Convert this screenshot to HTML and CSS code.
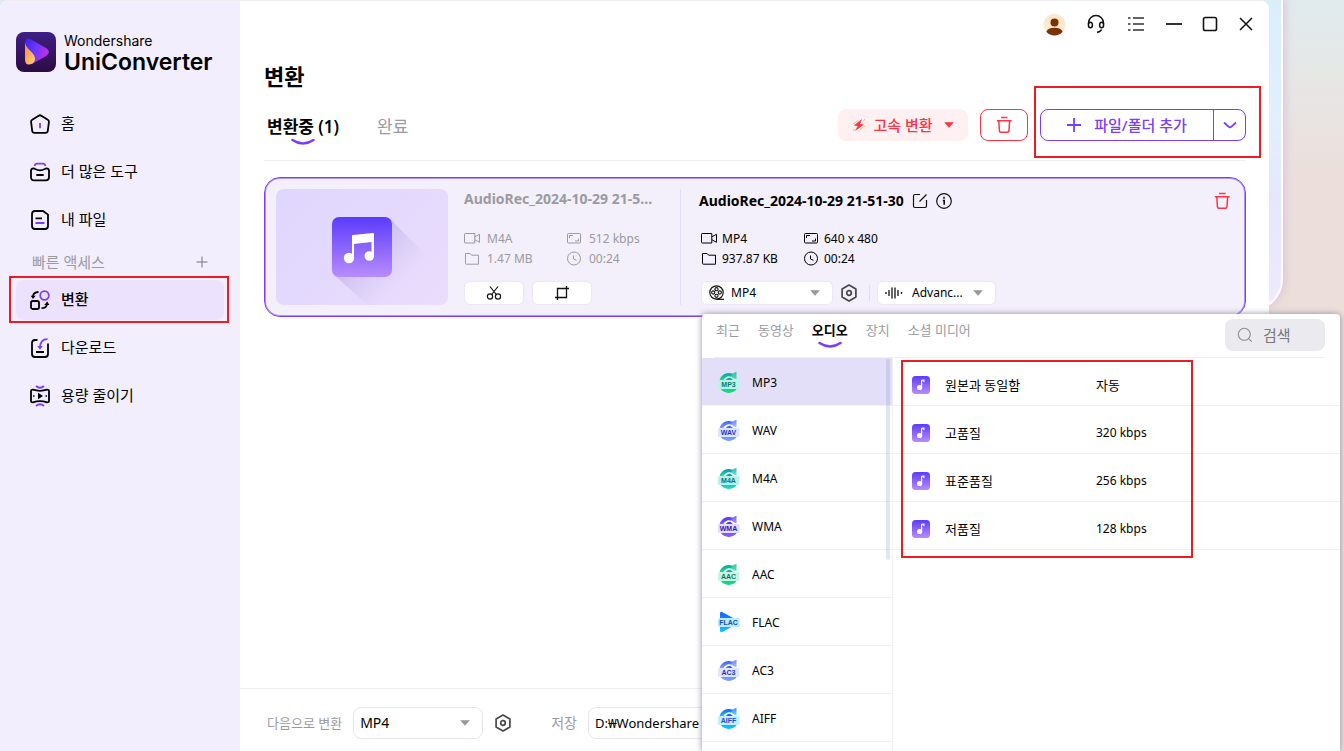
FILE: index.html
```html
<!DOCTYPE html>
<html lang="ko">
<head>
<meta charset="utf-8">
<meta name="viewport" content="width=device-width, initial-scale=1">
<title>Wondershare UniConverter</title>
<link rel="stylesheet" href="styles.css">
</head>
<body>
<svg class="defs" width="0" height="0" aria-hidden="true">
  <defs>
    <linearGradient id="note-bg" x1="0" y1="0" x2="0" y2="1"><stop offset="0" stop-color="#5b3bfb"/><stop offset="1" stop-color="#b88cfd"/></linearGradient>
    <linearGradient id="logo-bg" x1="0" y1="0" x2="0" y2="1"><stop offset="0" stop-color="#3f1f86"/><stop offset="1" stop-color="#2c0c40"/></linearGradient>
    <linearGradient id="logo-play" x1="0" y1="0" x2="1" y2="0.4"><stop offset="0" stop-color="#3a22e8"/><stop offset="0.5" stop-color="#6a35ff"/><stop offset="1" stop-color="#c030e8"/></linearGradient>
    <linearGradient id="logo-drop" x1="0" y1="0" x2="1" y2="1"><stop offset="0" stop-color="#ff8a3c"/><stop offset="1" stop-color="#ffd27a"/></linearGradient>
    <linearGradient id="g-green" x1="0" y1="0" x2="0" y2="1"><stop offset="0" stop-color="#00a9a5"/><stop offset="1" stop-color="#1fdc7c"/></linearGradient>
    <linearGradient id="g-teal" x1="0" y1="0" x2="0" y2="1"><stop offset="0" stop-color="#0099a8"/><stop offset="1" stop-color="#20dcc0"/></linearGradient>
    <linearGradient id="g-blue" x1="0" y1="0" x2="0" y2="1"><stop offset="0" stop-color="#3f5bff"/><stop offset="1" stop-color="#82a5ff"/></linearGradient>
    <linearGradient id="g-violet" x1="0" y1="0" x2="0" y2="1"><stop offset="0" stop-color="#4a35f5"/><stop offset="1" stop-color="#8c62ff"/></linearGradient>
    <linearGradient id="g-sky" x1="0" y1="0" x2="0" y2="1"><stop offset="0" stop-color="#1560ff"/><stop offset="1" stop-color="#10ccff"/></linearGradient>
  </defs>
  <symbol id="smile" viewBox="0 0 24 8"><path d="M1.500 2Q12 9 22.500 2" fill="none" stroke="#7b3dfc" stroke-width="2.600" stroke-linecap="round"/></symbol>
  <symbol id="caret" viewBox="0 0 10 6"><path d="M.8.5h8.400L5 5.400z" fill="currentColor" stroke="currentColor" stroke-linejoin="round" stroke-width=".6"/></symbol>
  <symbol id="trash" viewBox="0 0 16 18"><path d="M5 1.500h6.500M.8 4.800h14.800M2.800 5l.6 9.600q.1 1.600 1.600 1.600h6.400q1.500 0 1.600-1.600L13.600 5" fill="none" stroke="currentColor" stroke-width="1.500"/></symbol>
  <symbol id="camera" viewBox="0 0 17 16"><path d="M1.200 2.500h9.600v9.500H1.200q-.7 0-.7-.7V3.200q0-.7.7-.7zM10.800 5.800l4.700-2.500v8L10.800 8.700" fill="none" stroke="currentColor"/></symbol>
  <symbol id="folder" viewBox="0 0 17 16"><path d="M1.500 12.500v-10h4.600l1.500 1.700h6.900v9H2.300q-.8 0-.8-.7z" fill="none" stroke="currentColor"/></symbol>
  <symbol id="screen" viewBox="0 0 17 16"><rect x="1.500" y="2.500" width="13" height="9.500" rx="1" fill="none" stroke="currentColor"/><path d="M3.500 7V4.500H7M12.500 7.500V10H9" fill="none" stroke="currentColor"/></symbol>
  <symbol id="clock" viewBox="0 0 17 16"><circle cx="8" cy="7.500" r="6.500" fill="none" stroke="currentColor"/><path d="M7.500 4.500V8l3 1.300" fill="none" stroke="currentColor"/></symbol>
  <symbol id="hexnut" viewBox="0 0 18 18"><path d="M9 1l6.900 3.900v8.200L9 17l-6.900-3.900V4.900z" fill="none" stroke="#484848" stroke-width="1.700" stroke-linejoin="round"/><circle cx="9" cy="9" r="2.300" fill="none" stroke="#484848" stroke-width="1.700"/></symbol>
  <symbol id="note-small" viewBox="0 0 18 18"><rect width="18" height="18" rx="3.500" fill="url(#note-bg)"/><circle cx="7.600" cy="11.500" r="2.600" fill="#fff"/><path d="M9.600 11.500V5q0-.9 1-.9h1.300v2" fill="none" stroke="#fff" stroke-width="1.200"/></symbol>
  <symbol id="disc-note" viewBox="0 0 22 22"><path d="M1.500 9.500A9.500 9.500 0 0 1 14.500 2.800L13.300 5.800A6.300 6.300 0 0 0 5 9.500z"/><path d="M7.500 9.500Q8.800 6.600 12.200 6.800L15.500 9.500zM2.500 17.500h16.500A9.800 9.800 0 0 1 2.500 17.500z"/><path d="M11.800 3.800 18.500.8v7.400Q14.500 7.500 11.800 3.800z" opacity=".75"/></symbol>
</svg>

<div class="back-window"></div>

<div class="app">
  <aside class="sidebar">
    <div class="brand">
      <svg width="40" height="40" viewBox="0 0 40 40" aria-hidden="true"><rect width="40" height="40" rx="8" fill="url(#logo-bg)"/><path d="M9 11Q9 5 15 7.500L30 16q6 4 0 8L17 31.500Q9 34 9 26z" fill="url(#logo-play)"/><path d="M9 10q0 4 5.500 9 8 8 2 12.500Q9 35 9 27z" fill="url(#logo-drop)"/></svg>
      <div class="brand-text"><span class="brand-maker">Wondershare</span><span class="brand-name">UniConverter</span></div>
    </div>
    <nav>
      <ul class="nav-list">
        <li><a class="nav-item" href="#home"><svg width="20" height="20" viewBox="0 0 20 20"><path d="M8.700 1.700q1.300-.9 2.600 0l6.500 4.100q1.300.9 1.100 2.300l-1.100 8.800q-.3 2-2.300 2h-11q-2 0-2.300-2L1.100 8.100Q.9 6.700 2.200 5.800z" fill="none" stroke="#000" stroke-width="1.800"/><path d="M10 9v5.200" stroke="#7b3dfc" stroke-width="1.800"/></svg><span>홈</span></a></li>
        <li><a class="nav-item" href="#tools"><svg width="20" height="20" viewBox="0 0 20 20"><path d="M4.800 4Q5 1.700 7 1.700h6q2 0 2.200 2.300" fill="none" stroke="#7b3dfc" stroke-width="1.800"/><path d="M1 9q0-2.600 2.400-2.600 1 0 1.700.6Q10 9.600 14.900 7q.7-.6 1.700-.6Q19 6.400 19 9v6q0 3.400-3.300 3.400H4.300Q1 18.400 1 15z" fill="none" stroke="#000" stroke-width="1.800"/><path d="M6.300 13h7.400" stroke="#000" stroke-width="1.800"/></svg><span>더 많은 도구</span></a></li>
        <li><a class="nav-item" href="#files"><svg width="20" height="20" viewBox="0 0 20 20"><path d="M5 1h8l5 3.600V16q0 3-3 3H5q-3 0-3-3V4q0-3 3-3z" fill="none" stroke="#000" stroke-width="1.800"/><path d="M5.500 8.300h6.500" stroke="#000" stroke-width="1.800"/><path d="M5.500 13h9" stroke="#7b3dfc" stroke-width="1.800"/></svg><span>내 파일</span></a></li>
      </ul>
      <div class="nav-heading"><span>빠른 액세스</span><button class="icon-button" type="button" aria-label="추가"><svg width="12" height="12" viewBox="0 0 12 12"><path d="M6 .5v11M.5 6h11" stroke="#77727f"/></svg></button></div>
      <ul class="nav-list">
        <li><a class="nav-item nav-item-active" href="#convert"><svg width="20" height="20" viewBox="0 0 20 20"><circle cx="14.500" cy="5.500" r="4.300" fill="none" stroke="#7b3dfc" stroke-width="1.800"/><rect x="1" y="11" width="8" height="8" rx="1.800" fill="none" stroke="#000" stroke-width="1.800"/><path d="M8.500 2Q3.200 2.200 3 6.500M11.500 18.200q5.200-.2 5.500-4" fill="none" stroke="#000" stroke-width="1.800"/><path d="M.7 5.800h5L3 9zM14.200 15l3-3.400 2.200 3.400z"/></svg><span>변환</span><i class="callout callout-nav"></i></a></li>
        <li><a class="nav-item" href="#download"><svg width="20" height="20" viewBox="0 0 20 20"><path d="M7.500 2H5Q2 2 2 5v11q0 3 3 3h10q3 0 3-3V5.500M6 14h8" fill="none" stroke="#000" stroke-width="1.800"/><path d="M17.500 1.200Q10 1 10 10" fill="none" stroke="#7b3dfc" stroke-width="1.800"/><path d="M7.300 8h5.400L10 11.800z" fill="#7b3dfc"/></svg><span>다운로드</span></a></li>
        <li><a class="nav-item" href="#compress"><svg width="20" height="22" viewBox="0 0 20 22"><path d="M6 1q4 3.400 8 0M6 21q4-3.400 8 0" fill="none" stroke="#7b3dfc" stroke-width="2"/><path d="M1 6.200Q1 4.500 3 4.700q7 2.200 14 0 2-.2 2 1.500v9.600q0 1.700-2 1.500-7-2.200-14 0-2 .2-2-1.500z" fill="none" stroke="#000" stroke-width="1.800"/><path d="M8 7.700v6.600l5-3.300z"/><path d="M3 11h1.500M15.500 11H17" stroke="#000" stroke-width="1.500"/></svg><span>용량 줄이기</span></a></li>
      </ul>
    </nav>
  </aside>

  <main class="main">
    <header class="titlebar">
      <button class="icon-button titlebar-tool" type="button" aria-label="계정"><svg width="23" height="23" viewBox="0 0 24 24"><circle cx="12" cy="12" r="11.300" fill="#ffe9cc"/><circle cx="12" cy="10" r="4.200" fill="#7a3206"/><path d="M3.500 19.500q1.500-4 8.500-4t8.500 4Q17 23.500 12 23.500t-8.500-4z" fill="#7a3206"/></svg></button>
      <button class="icon-button titlebar-tool" type="button" aria-label="고객 지원"><svg width="18" height="20" viewBox="0 0 18 20"><path d="M1.500 10V9a7.500 7.500 0 0 1 15 0v1" fill="none" stroke="#111" stroke-width="1.500"/><ellipse cx="3.400" cy="11" rx="2" ry="2.800" fill="none" stroke="#111" stroke-width="1.500"/><ellipse cx="14.600" cy="11" rx="2" ry="2.800" fill="none" stroke="#111" stroke-width="1.500"/><path d="M14.500 15.500Q13.500 18 10 18.300" fill="none" stroke="#111" stroke-width="1.500"/></svg></button>
      <button class="icon-button titlebar-tool" type="button" aria-label="메뉴"><svg width="16" height="16" viewBox="0 0 16 16"><path d="M0 2h2.500M5 2h11M0 8h2.500M5 8h11M0 14h2.500M5 14h11" stroke="#333" stroke-width="1.600"/></svg></button>
      <button class="icon-button" type="button" aria-label="최소화"><svg width="16" height="16" viewBox="0 0 16 16"><path d="M0 8h16" stroke="#333" stroke-width="1.800"/></svg></button>
      <button class="icon-button" type="button" aria-label="최대화"><svg width="16" height="16" viewBox="0 0 16 16"><rect x="1.500" y="1.500" width="13" height="13" rx="1.800" fill="none" stroke="#111" stroke-width="1.600"/></svg></button>
      <button class="icon-button" type="button" aria-label="닫기"><svg width="16" height="16" viewBox="0 0 16 16"><path d="M2 2l12 12M14 2 2 14" stroke="#111" stroke-width="1.500"/></svg></button>
    </header>

    <div class="content">
      <h1 class="page-title">변환</h1>
      <div class="toolbar">
        <button class="tab tab-active" type="button">변환중 (1)<svg class="smile" width="24" height="8"><use href="#smile"/></svg></button>
        <button class="tab" type="button">완료</button>
        <div class="actions">
          <button class="fast-button" type="button"><svg width="14" height="14" viewBox="0 0 14 14"><path d="M10 1 1.800 7.500l3.900.5L3 13l9-6.500-4-.5z" fill="#ff3246"/><path d="M1 6l5-3.500M8 11.500 13 8M11 3.500 13 1M1 13l1.500-2" stroke="#ffc04a"/></svg><span>고속 변환</span><svg class="fast-caret" width="10" height="6"><use href="#caret"/></svg></button>
          <button class="clear-button" type="button" aria-label="모두 삭제"><svg width="16" height="18"><use href="#trash"/></svg></button>
          <div class="add-group">
            <button class="add-button" type="button"><svg width="14" height="14" viewBox="0 0 14 14"><path d="M7 0v14M0 7h14" stroke="#7b3dfc" stroke-width="1.800"/></svg><span>파일/폴더 추가</span></button>
            <button class="add-more" type="button" aria-label="추가 옵션"><svg width="14" height="8" viewBox="0 0 14 8"><path d="M1 1.500 5.500 5.700q1.500 1.400 3 0L13 1.500" fill="none" stroke="#7b3dfc" stroke-width="1.800"/></svg></button>
            <i class="callout callout-add"></i>
          </div>
        </div>
      </div>

      <article class="card">
        <div class="thumb">
          <svg width="172" height="116" viewBox="0 0 172 116" aria-hidden="true">
            <defs><linearGradient id="long-shadow" gradientUnits="userSpaceOnUse" x1="95" y1="50" x2="132" y2="88"><stop offset="0" stop-color="#b8a8e0" stop-opacity=".6"/><stop offset="1" stop-color="#cdbcf0" stop-opacity="0"/></linearGradient></defs>
            <path d="M114 30 160 76 110 116H92L58 86z" fill="url(#long-shadow)"/>
            <rect x="56" y="28" width="60" height="60" rx="7" fill="url(#note-bg)"/>
            <path d="M76 47q0-1 1-1l20-2q1 0 1 1v23h-2.500V53L78 55v14h-2z" fill="#fff"/>
            <circle cx="73" cy="69" r="5.200" fill="#fff"/><circle cx="93.300" cy="67" r="4.800" fill="#fff"/>
          </svg>
        </div>
        <section class="source">
          <h2 class="file-name">AudioRec_2024-10-29 21-5...</h2>
          <ul class="meta">
            <li><svg width="17" height="16"><use href="#camera"/></svg>M4A</li>
            <li><svg width="17" height="16"><use href="#screen"/></svg>512 kbps</li>
            <li><svg width="17" height="16"><use href="#folder"/></svg>1.47 MB</li>
            <li><svg width="17" height="16"><use href="#clock"/></svg>00:24</li>
          </ul>
          <div class="controls">
            <button class="chip" type="button" aria-label="자르기"><svg width="16" height="16" viewBox="0 0 16 16"><path d="M4 1.500 10.700 10M12 1.500 5.300 10" stroke="#111" stroke-width="1.200"/><circle cx="4" cy="11.500" r="2.600" fill="none" stroke="#111" stroke-width="1.200"/><circle cx="12" cy="11.500" r="2.600" fill="none" stroke="#111" stroke-width="1.200"/></svg></button>
            <button class="chip" type="button" aria-label="영역 자르기"><svg width="16" height="16" viewBox="0 0 16 16"><path d="M3.500 15V3.500H15M1 12.500h11.500V1" fill="none" stroke="#111" stroke-width="1.300"/></svg></button>
          </div>
        </section>
        <section class="target">
          <div class="target-head">
            <h2 class="file-name">AudioRec_2024-10-29 21-51-30</h2>
            <button class="icon-button" type="button" aria-label="이름 변경"><svg width="16" height="16" viewBox="0 0 16 16"><path d="M8 1.500H3Q1.500 1.500 1.500 3v10q0 1.500 1.500 1.500h10q1.500 0 1.500-1.500V7M7.500 8.500 14.500 1.500" fill="none" stroke="#111" stroke-width="1.200"/></svg></button>
            <button class="icon-button" type="button" aria-label="정보"><svg width="16" height="16" viewBox="0 0 16 16"><circle cx="8" cy="8" r="7.300" fill="none" stroke="#111" stroke-width="1.200"/><path d="M8 3.800v1.900M6.800 7.500H8.200v4.300" fill="none" stroke="#111" stroke-width="1.600"/></svg></button>
            <button class="icon-button remove" type="button" aria-label="삭제"><svg width="16" height="18"><use href="#trash"/></svg></button>
          </div>
          <ul class="meta">
            <li><svg width="17" height="16"><use href="#camera"/></svg>MP4</li>
            <li><svg width="17" height="16"><use href="#screen"/></svg>640 x 480</li>
            <li><svg width="17" height="16"><use href="#folder"/></svg>937.87 KB</li>
            <li><svg width="17" height="16"><use href="#clock"/></svg>00:24</li>
          </ul>
          <div class="controls">
            <label class="picker picker-format"><svg width="16" height="16" viewBox="0 0 16 16"><circle cx="7.500" cy="7.500" r="6.700" fill="none" stroke="#111" stroke-width="1.200"/><path d="M7.500 14.300H15" stroke="#111" stroke-width="1.200"/><g fill="none" stroke="#111" stroke-width="1.100"><circle cx="7.500" cy="4.200" r="1.600"/><circle cx="7.500" cy="10.800" r="1.600"/><circle cx="4.200" cy="7.500" r="1.600"/><circle cx="10.800" cy="7.500" r="1.600"/></g></svg><select aria-label="출력 형식"><option>MP4</option></select><svg class="caret" width="10" height="6"><use href="#caret"/></svg></label>
            <button class="icon-button" type="button" aria-label="형식 설정"><svg width="18" height="18"><use href="#hexnut"/></svg></button>
            <span class="separator"></span>
            <label class="picker picker-audio"><svg width="18" height="14" viewBox="0 0 18 14"><path d="M1 6v2M4 4v6M7 1.500v11M10 1.500v11M13 4v6M16.500 6v2" stroke="#111" stroke-width="1.300"/></svg><select aria-label="오디오 옵션"><option>Advanc...</option></select><svg class="caret" width="10" height="6"><use href="#caret"/></svg></label>
          </div>
        </section>
      </article>
    </div>

    <footer class="footer">
      <label class="footer-label" for="convert-to">다음으로 변환</label>
      <div class="picker picker-footer"><select id="convert-to"><option>MP4</option></select><svg class="caret" width="10" height="6"><use href="#caret"/></svg></div>
      <button class="icon-button" type="button" aria-label="설정"><svg width="18" height="18"><use href="#hexnut"/></svg></button>
      <label class="save-label" for="save-path">저장</label>
      <input class="path-input" id="save-path" type="text" value="D:₩Wondershare">
    </footer>
  </main>
</div>

<section class="popup" aria-label="출력 형식 선택">
  <header class="popup-head">
    <div class="popup-tabs">
      <button class="popup-tab" type="button">최근</button>
      <button class="popup-tab" type="button">동영상</button>
      <button class="popup-tab popup-tab-active" type="button">오디오<svg class="smile" width="24" height="8"><use href="#smile"/></svg></button>
      <button class="popup-tab" type="button">장치</button>
      <button class="popup-tab" type="button">소셜 미디어</button>
    </div>
    <label class="search"><svg width="16" height="16" viewBox="0 0 16 16"><circle cx="7.300" cy="7.300" r="6" fill="none" stroke="#8e8e93" stroke-width="1.100"/><path d="M11.700 11.700l3 3" stroke="#8e8e93" stroke-width="1.100"/></svg><input type="search" placeholder="검색" aria-label="검색"></label>
  </header>
  <div class="popup-body">
    <ul class="formats">
      <li><button class="format format-active" type="button"><svg width="22" height="22" viewBox="0 0 22 22" fill="url(#g-green)"><use href="#disc-note"/><rect x="0" y="9" width="21.500" height="9" rx="1.500" fill="#b8f5e4"/><text class="badge-text" x="10.500" y="16" fill="#087a68">MP3</text></svg><span>MP3</span></button></li>
      <li><button class="format" type="button"><svg width="22" height="22" viewBox="0 0 22 22" fill="url(#g-blue)"><use href="#disc-note"/><rect x="0" y="9" width="21.500" height="9" rx="1.500" fill="#dbe5ff"/><text class="badge-text" x="10.500" y="16" fill="#2434c8">WAV</text></svg><span>WAV</span></button></li>
      <li><button class="format" type="button"><svg width="22" height="22" viewBox="0 0 22 22" fill="url(#g-teal)"><use href="#disc-note"/><rect x="0" y="9" width="21.500" height="9" rx="1.500" fill="#b5f2e8"/><text class="badge-text" x="10.500" y="16" fill="#08707a">M4A</text></svg><span>M4A</span></button></li>
      <li><button class="format" type="button"><svg width="22" height="22" viewBox="0 0 22 22" fill="url(#g-violet)"><use href="#disc-note"/><rect x="0" y="9" width="21.500" height="9" rx="1.500" fill="#e2dcff"/><text class="badge-text" x="10.500" y="16" fill="#3020b8">WMA</text></svg><span>WMA</span></button></li>
      <li><button class="format" type="button"><svg width="22" height="22" viewBox="0 0 22 22" fill="url(#g-green)"><use href="#disc-note"/><rect x="0" y="9" width="21.500" height="9" rx="1.500" fill="#c5f6e2"/><text class="badge-text" x="10.500" y="16" fill="#087a68">AAC</text></svg><span>AAC</span></button></li>
      <li><button class="format" type="button"><svg width="22" height="22" viewBox="0 0 22 22" fill="url(#g-sky)"><path d="M2 2.500Q2 0 4.500 1.200L18 8.500v5L4.500 21Q2 22 2 19.500z"/><rect x="0" y="7" width="21.500" height="9" rx="1.500" fill="#b8ecff"/><text class="badge-text" x="10.500" y="14" fill="#104ec0">FLAC</text></svg><span>FLAC</span></button></li>
      <li><button class="format" type="button"><svg width="22" height="22" viewBox="0 0 22 22" fill="url(#g-blue)"><use href="#disc-note"/><rect x="0" y="9" width="21.500" height="9" rx="1.500" fill="#e0e6ff"/><text class="badge-text" x="10.500" y="16" fill="#2434c8">AC3</text></svg><span>AC3</span></button></li>
      <li><button class="format" type="button"><svg width="22" height="22" viewBox="0 0 22 22" fill="url(#g-sky)"><use href="#disc-note"/><rect x="0" y="9" width="21.500" height="9" rx="1.500" fill="#c0eeff"/><text class="badge-text" x="10.500" y="16" fill="#1050d0">AIFF</text></svg><span>AIFF</span></button></li>
    </ul>
    <div class="qualities">
      <table class="quality-table">
        <tbody>
          <tr><td class="q-icon"><svg width="18" height="18"><use href="#note-small"/></svg></td><td class="q-name">원본과 동일함</td><td class="q-rate q-auto">자동</td></tr>
          <tr><td class="q-icon"><svg width="18" height="18"><use href="#note-small"/></svg></td><td class="q-name">고품질</td><td class="q-rate">320 kbps</td></tr>
          <tr><td class="q-icon"><svg width="18" height="18"><use href="#note-small"/></svg></td><td class="q-name">표준품질</td><td class="q-rate">256 kbps</td></tr>
          <tr><td class="q-icon"><svg width="18" height="18"><use href="#note-small"/></svg></td><td class="q-name">저품질</td><td class="q-rate">128 kbps</td></tr>
        </tbody>
      </table>
      <i class="callout callout-quality"></i>
    </div>
    <i class="scroll-thumb"></i>
  </div>
</section>
</body>
</html>
```

FILE: styles.css
```css
:root {
  --purple: #7b3dfc;
  --red: #ff3246;
  --line: #f0f0f3;
  --muted: #9b9b9f;
}

* { box-sizing: border-box; }

body {
  position: relative;
  min-height: 100vh;
  margin: 0;
  overflow: hidden;
  background: linear-gradient(180deg, #e0ebee 0, #e8e5e3 100px, #ecdedb 180px, #ecdfda 100%);
  color: #000;
  font: 12px/16px "Noto Sans", "Noto Sans CJK KR", sans-serif;
}

button, input, select {
  margin: 0;
  padding: 0;
  border: 0;
  background: none;
  color: inherit;
  font: inherit;
}

select { appearance: none; outline: 0; }
h1, h2, ul { margin: 0; padding: 0; }
ul { list-style: none; }
svg { display: block; flex: none; }
.defs { position: absolute; }

.icon-button {
  display: flex;
  align-items: center;
  justify-content: center;
  flex: none;
}

/* red highlight frames */
.callout {
  position: absolute;
  border: 2px solid #ed1c24;
  pointer-events: none;
}

.back-window {
  position: absolute;
  top: -2px;
  right: 61px;
  width: 80px;
  height: 313px;
  border: 2px solid #fdfcff;
  border-bottom-right-radius: 32px;
  background: linear-gradient(180deg, #daeefa 0, #e2effd 120px, #e6e6fe 200px, #efeafd 100%);
  box-shadow: 2px 0 8px #d9c6dc;
}

.app {
  position: relative;
  display: flex;
  min-height: 100vh;
  margin-right: 75px;
  border-top: 1px solid #eeedf3;
  border-radius: 8px 8px 0 0;
  background: #fff;
  overflow: hidden;
}

/* sidebar */
.sidebar {
  flex: none;
  width: 240px;
  padding: 31px 16px 0;
  background: #f3eefe;
}

.brand { display: flex; gap: 8px; height: 72px; }
.brand-text {
  display: flex;
  flex-direction: column;
  font-family: Inter, sans-serif;
}
.brand-maker { font-size: 14px; line-height: 17px; }
.brand-name { font-size: 23px; font-weight: 600; line-height: 26px; }

.nav-list { display: grid; gap: 8px; }
.nav-item {
  position: relative;
  display: flex;
  align-items: center;
  gap: 11px;
  height: 40px;
  padding: 0 14px;
  border-radius: 8px;
  color: #000;
  font-size: 15px;
  line-height: 20px;
  text-decoration: none;
}
.nav-item span { padding-bottom: 2px; }
.nav-item-active { background: #ede2fd; font-weight: 500; }
.callout-nav { inset: -4px -5px -3px -7px; }

.nav-heading {
  display: flex;
  align-items: center;
  justify-content: space-between;
  height: 40px;
  padding: 4px 16px 0;
  color: var(--muted);
  font-size: 15px;
  line-height: 20px;
}

/* main area */
.main {
  display: flex;
  flex: 1;
  flex-direction: column;
  min-width: 0;
}

.titlebar {
  display: flex;
  align-items: center;
  justify-content: flex-end;
  gap: 20px;
  height: 46px;
  padding: 0 15px;
}
.titlebar-tool { min-width: 20px; }

.content { flex: 1; padding: 0 23px 0 24px; }

.page-title {
  padding: 13px 0 15px;
  font-size: 22px;
  line-height: 32px;
  font-weight: 700;
}

.toolbar {
  display: flex;
  align-items: center;
  gap: 38px;
  padding: 2px 0 19px 3px;
  border-bottom: 1px solid var(--line);
}

.tab {
  position: relative;
  color: var(--muted);
  font-size: 17px;
  line-height: 24px;
  padding-top: 4px;
}
.tab-active { color: #000; font-weight: 600; }
.smile { position: absolute; left: 50%; bottom: -7px; margin-left: -12px; }

.actions { display: flex; gap: 12px; margin-left: auto; }

.fast-button {
  display: flex;
  align-items: center;
  justify-content: center;
  gap: 7px;
  width: 130px;
  height: 32px;
  border-radius: 8px;
  background: #fff0f1;
  color: var(--red);
  font-size: 15px;
  line-height: 20px;
  font-weight: 500;
}
.fast-caret { margin-left: 4px; }

.clear-button {
  display: flex;
  align-items: center;
  justify-content: center;
  width: 48px;
  height: 32px;
  border: 1px solid var(--red);
  border-radius: 8px;
  color: var(--red);
}

.add-group {
  position: relative;
  display: flex;
  height: 32px;
  border: 1px solid var(--purple);
  border-radius: 8px;
  color: var(--purple);
}
.add-button {
  display: flex;
  align-items: center;
  justify-content: center;
  gap: 13px;
  width: 172px;
  font-size: 15px;
  line-height: 20px;
  font-weight: 500;
}
.add-more {
  display: flex;
  align-items: center;
  justify-content: center;
  width: 32px;
  border-left: 1px solid var(--purple);
}
.callout-add { inset: -24px -16px -18px -7px; }

/* conversion card */
.card {
  display: flex;
  gap: 16px;
  margin-top: 16px;
  padding: 11px;
  border: 1px solid var(--purple);
  border-radius: 16px;
  background: #f3effb;
  box-shadow: inset 0 0 0 1px #b392fb;
}

.thumb {
  flex: none;
  width: 172px;
  height: 116px;
  border-radius: 8px;
  background: linear-gradient(135deg, #dfd6fe, #eadcfc);
}

.source { width: 217px; color: var(--muted); border-right: 1px solid #e4def2; }
.target { flex: 1; padding: 2px 0 0 2px; }
.file-name { font-size: 14px; line-height: 20px; font-weight: 700; }

.target-head { display: flex; align-items: center; gap: 8px; }
.target-head .remove { margin: 0 4px 0 auto; color: var(--red); }

.meta {
  display: grid;
  grid-template-columns: 102px 102px;
  row-gap: 4px;
  margin-top: 22px;
}
.meta li { display: flex; align-items: center; gap: 6px; }
.target .meta { margin-top: 20px; padding-left: 2px; }
.target .meta li { gap: 4px; }

.controls { display: flex; align-items: center; gap: 8px; margin-top: 14px; }
.target .controls { gap: 7px; padding-left: 2px; }

.chip, .picker {
  display: flex;
  align-items: center;
  height: 24px;
  border-radius: 6px;
  background: #fff;
  border: 1px solid #ece8f4;
}
.chip { justify-content: center; width: 60px; }
.picker { gap: 6px; padding: 0 12px 0 7px; }
.picker select { flex: 1; min-width: 0; }
.caret { color: #98989c; pointer-events: none; }
.picker-format { width: 132px; }
.picker-audio { width: 119px; gap: 9px; }
.separator { width: 1px; height: 16px; margin: 0 0 0 4px; background: #e2dcf0; }

/* bottom bar */
.footer {
  display: flex;
  align-items: center;
  gap: 11px;
  height: 63px;
  padding: 6px 23px 0 27px;
  border-top: 1px solid var(--line);
  color: var(--muted);
}
.footer-label { font-size: 13px; }
.save-label { margin-left: 28px; font-size: 14px; }
.picker-footer {
  width: 130px;
  height: 32px;
  padding-left: 6px;
  border-color: #e6e6ec;
  border-radius: 8px;
  color: #000;
  font-size: 14px;
  line-height: 20px;
}
.path-input {
  width: 300px;
  height: 32px;
  padding: 0 6px;
  border: 1px solid #e6e6ec;
  border-radius: 8px;
  color: #000;
  font-size: 13px;
}

/* format popup */
.popup {
  position: absolute;
  top: 314px;
  right: 4px;
  bottom: 0;
  left: 702px;
  display: flex;
  flex-direction: column;
  border-radius: 4px 4px 0 0;
  background: #fff;
  box-shadow: 0 0 6px 0 #8f8b9d;
  overflow: hidden;
}

.popup-head {
  display: flex;
  align-items: center;
  flex: none;
  justify-content: space-between;
  height: 44px;
  margin: 0 15px 0 12px;
  padding-bottom: 2px;
  border-bottom: 1px solid var(--line);
}
.popup-tabs { display: flex; gap: 18px; padding: 0 0 10px 2px; }
.popup-tab { position: relative; color: var(--muted); font-size: 13px; line-height: 20px; }
.popup-tab-active { color: #000; font-weight: 600; }
.popup-tab .smile { bottom: -9px; }

.search {
  display: flex;
  align-items: center;
  gap: 10px;
  width: 100px;
  height: 32px;
  padding: 0 12px;
  border-radius: 8px;
  background: #ebeaef;
}
.search input { flex: 1; min-width: 0; font-size: 15px; line-height: 20px; outline: 0; }
.search input::placeholder { color: #77777c; }

.popup-body { position: relative; display: flex; flex: 1; min-height: 0; }

.formats { flex: none; width: 191px; border-right: 1px solid var(--line); }
.format {
  display: flex;
  align-items: center;
  gap: 12px;
  width: 100%;
  height: 48px;
  padding: 1px 16px 0;
  border-bottom: 1px solid var(--line);
}
.format span { padding-top: 2px; }
.format-active { background: #e4dff8; }
.badge-text {
  font: 700 7px/8px "Liberation Sans", sans-serif;
  text-anchor: middle;
}

.scroll-thumb {
  position: absolute;
  top: 1px;
  left: 184px;
  width: 4px;
  height: 201px;
  border-radius: 2px;
  background: rgb(120 140 180 / 22%);
}

.qualities { position: relative; flex: 1; min-width: 0; }
.quality-table { width: 100%; border-spacing: 0; table-layout: fixed; }
.quality-table td {
  height: 48px;
  padding: 7px 0 0;
  border-bottom: 1px solid var(--line);
}
.quality-table .q-icon { width: 52px; padding-left: 19px; }
.q-name { width: 151px; font-size: 13px; }
.q-auto { font-size: 13px; }
.callout-quality { top: 2px; left: 8px; width: 292px; height: 198px; }
```
